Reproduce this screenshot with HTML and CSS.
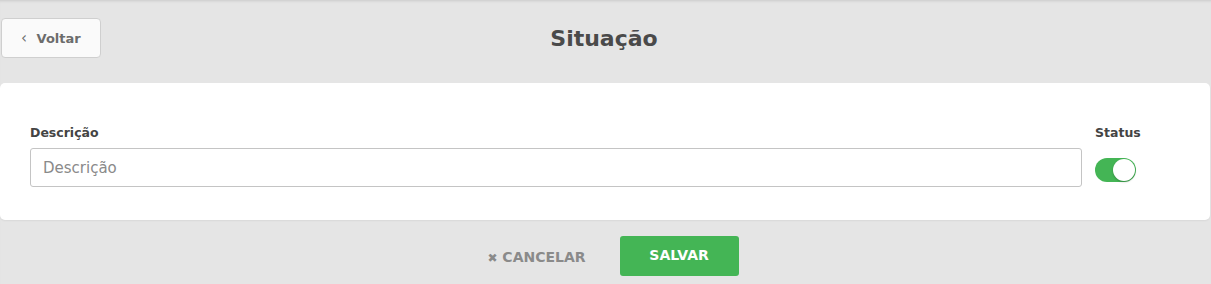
FILE: index.html
```html
<!DOCTYPE html>
<html lang="pt-BR">
<head>
    <meta charset="UTF-8">
    <meta name="viewport" content="width=device-width, initial-scale=1.0">
    <title>Situação</title>
    <link rel="stylesheet" href="styles.css">
</head>
<body>
    <div class="page">
        <div class="page-header">
            <button class="back-btn"><span class="back-arrow">&lsaquo;</span> Voltar</button>
            <h1>Situação</h1>
        </div>

        <div class="card">
            <div class="field field-grow">
                <label for="descricao">Descrição</label>
                <input id="descricao" type="text" placeholder="Descrição">
            </div>
            <div class="field field-status">
                <label>Status</label>
                <div class="toggle on"><span class="knob"></span></div>
            </div>
        </div>

        <div class="actions">
            <button class="cancel-btn"><span class="x">&#10006;</span> CANCELAR</button>
            <button class="save-btn">SALVAR</button>
        </div>
    </div>
</body>
</html>
```

FILE: styles.css
```css
* {
    margin: 0;
    padding: 0;
    box-sizing: border-box;
    font-family: "DejaVu Sans", Arial, sans-serif;
}

body {
    background-color: #e5e5e5;
    min-height: 100vh;
    box-shadow: inset 0 3px 3px -2px rgba(0,0,0,0.12);
}

.page {
    padding: 18px 1px 0 0;
}

.page-header {
    position: relative;
    display: flex;
    align-items: center;
    justify-content: center;
    height: 40px;
}

.page-header h1 {
    font-size: 22px;
    font-weight: 700;
    color: #4a4a4a;
    margin-right: 2px;
}

.back-btn {
    position: absolute;
    left: 1px;
    top: 0;
    width: 100px;
    height: 40px;
    background-color: #fafafa;
    border: 1px solid #cfcfcf;
    border-radius: 4px;
    color: #6c6c6c;
    font-size: 13px;
    font-weight: 700;
    text-align: left;
    padding-left: 19px;
}

.back-arrow {
    font-size: 15px;
    font-weight: 400;
    margin-right: 5px;
}

.card {
    display: flex;
    align-items: flex-start;
    gap: 13px;
    background-color: white;
    border-radius: 5px;
    margin-top: 25px;
    padding: 43px 30px 33px 30px;
    box-shadow: 0 1px 2px rgba(0,0,0,0.06);
}

.field label {
    display: block;
    font-size: 12.5px;
    line-height: 14px;
    font-weight: 700;
    color: #444;
    margin-bottom: 8px;
}

.field-grow {
    flex: 1;
}

.field input {
    width: 100%;
    height: 39px;
    border: 1px solid #c4c4c4;
    border-radius: 3px;
    padding: 0 12px;
    font-size: 15px;
    color: #444;
}

.field input::placeholder {
    color: #8a8a8a;
}

.field-status {
    width: 85px;
}

.toggle {
    width: 41px;
    height: 24px;
    border-radius: 12px;
    background-color: #e0e0e0;
    padding: 1px;
    margin-top: 18px;
    display: flex;
}

.toggle.on {
    background-color: #44b555;
    justify-content: flex-end;
}

.knob {
    width: 22px;
    height: 22px;
    border-radius: 50%;
    background-color: white;
    box-shadow: 0 1px 2px rgba(0,0,0,0.25);
}

.actions {
    display: flex;
    justify-content: center;
    align-items: center;
    gap: 34px;
    margin-top: 16px;
    padding-left: 16px;
}

.cancel-btn {
    background: none;
    border: none;
    color: #8a8a8a;
    font-size: 14px;
    font-weight: 700;
    padding-top: 2px;
}

.cancel-btn .x {
    font-size: 12px;
}

.save-btn {
    width: 119px;
    height: 40px;
    background-color: #44b555;
    color: white;
    border: none;
    border-radius: 3px;
    font-size: 14px;
    font-weight: 700;
    padding-bottom: 3px;
}
```
